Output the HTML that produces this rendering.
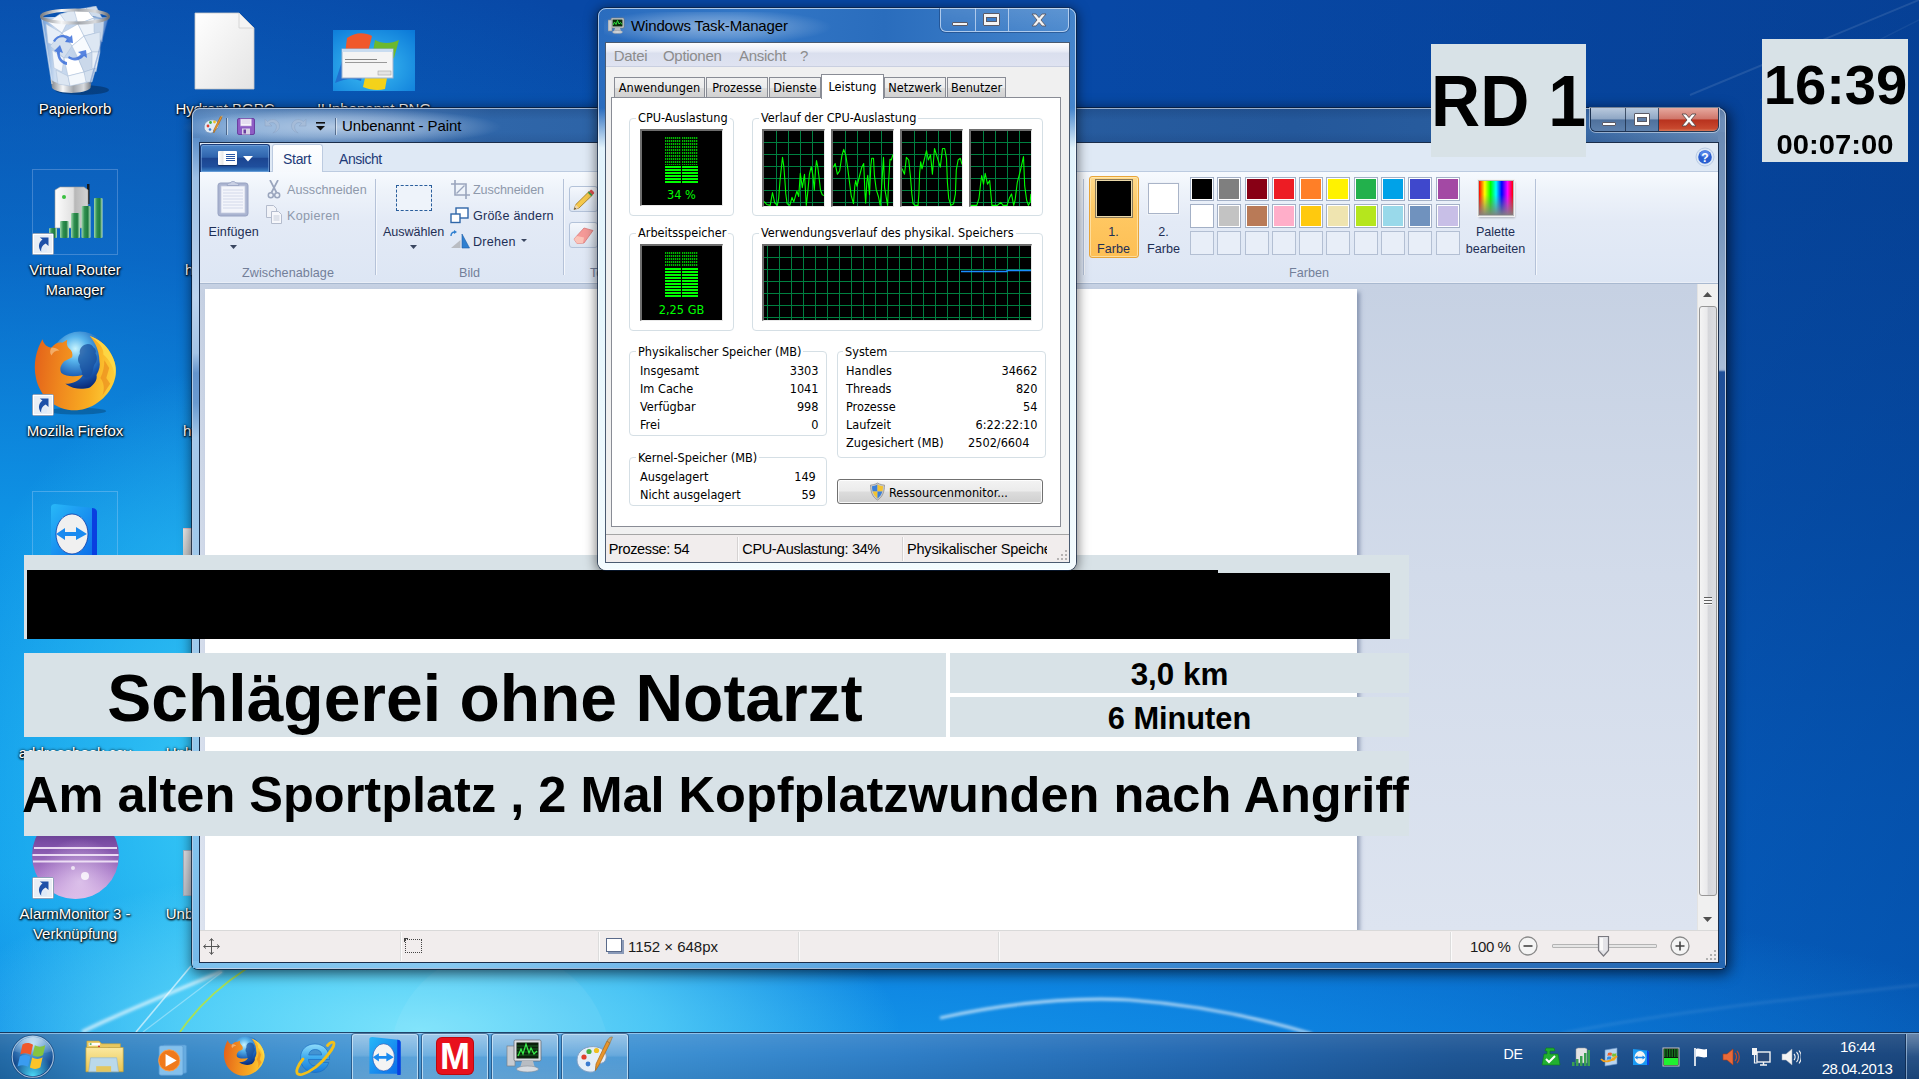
<!DOCTYPE html>
<html lang="de">
<head>
<meta charset="utf-8">
<title>Desktop</title>
<style>
html,body{margin:0;padding:0;}
body{width:1919px;height:1079px;overflow:hidden;position:relative;font-family:"Liberation Sans",sans-serif;font-size:15px;color:#000;
 background:
  radial-gradient(ellipse 480px 170px at 420px 1030px, rgba(128,230,252,.95), rgba(98,218,250,.7) 50%, rgba(60,195,246,0) 100%),
  radial-gradient(ellipse 330px 440px at 260px 800px, rgba(60,206,248,1), rgba(48,194,244,.7) 45%, rgba(30,160,235,0) 100%),
  radial-gradient(ellipse 1500px 230px at 600px 1079px, rgba(24,160,238,.95), rgba(16,140,230,.75) 50%, rgba(10,120,220,0) 100%),
  radial-gradient(ellipse 1250px 1000px at 0px 900px, rgba(16,158,236,1), rgba(15,152,233,.92) 38%, rgba(12,128,222,.55) 65%, rgba(8,100,205,0) 100%),
  linear-gradient(90deg, rgba(4,60,140,0) 1100px, rgba(3,50,120,.35) 1919px),
  linear-gradient(180deg,#0848a6 0px,#074aa6 200px,#0654b4 500px,#0662c8 800px,#066cd4 1079px);
}
.abs,.abs *{position:absolute;box-sizing:border-box;}
div,span,svg{position:absolute;box-sizing:border-box;}
.t{white-space:nowrap;line-height:1;}
.seg{font-family:"Liberation Sans",sans-serif;}
.tah{font-family:"DejaVu Sans Condensed","DejaVu Sans","Liberation Sans",sans-serif;font-size:12.6px;}
.ov{background:#d8e2e7;}
.ovt{font-family:"Liberation Sans",sans-serif;font-weight:bold;color:#000;white-space:nowrap;line-height:1;}
.dl{color:#fff;font-size:15px;white-space:nowrap;line-height:20px;text-align:center;text-shadow:0 1px 2px #000,0 0 3px rgba(0,0,0,.9),1px 1px 2px rgba(0,0,0,.8);}
</style>
</head>
<body>
<!-- wallpaper streaks -->
<svg style="left:0;top:940px" width="1919" height="100" viewBox="0 940 1919 100">
<defs><filter id="bl1" x="-5%" y="-50%" width="110%" height="200%"><feGaussianBlur stdDeviation="1.600"/></filter><filter id="bl2" x="-5%" y="-50%" width="110%" height="200%"><feGaussianBlur stdDeviation=".7"/></filter></defs>
<path d="M82 1032C130 1008 180 990 222 971" stroke="#fff" stroke-opacity=".7" stroke-width="3.500" fill="none" filter="url(#bl1)"/>
<path d="M136 1032L191 966" stroke="#fff" stroke-opacity=".6" stroke-width="1.600" fill="none" filter="url(#bl2)"/>
<path d="M143 1032L222 972" stroke="#fff" stroke-opacity=".35" stroke-width="1.200" fill="none" filter="url(#bl2)"/>
<path d="M180 1032C198 1006 220 986 246 969" stroke="#b8e43a" stroke-opacity=".85" stroke-width="1.800" fill="none" filter="url(#bl2)"/>
<path d="M940 1018C1010 1002 1080 997 1130 1000C1200 1005 1260 1018 1312 1034" stroke="#fff" stroke-opacity=".75" stroke-width="2.600" fill="none" filter="url(#bl1)"/>
<path d="M1560 1034C1650 1015 1780 1000 1919 985" stroke="#fff" stroke-opacity=".12" stroke-width="2" fill="none" filter="url(#bl1)"/>
<circle cx="500" cy="1060" r="110" fill="#fff" fill-opacity=".06"/>
</svg>
<svg style="left:1500px;top:0" width="419" height="110" viewBox="1500 0 419 110"><path d="M1919 0L1690 95" stroke="#fff" stroke-opacity=".10" stroke-width="2" fill="none"/><path d="M1919 20L1760 100" stroke="#fff" stroke-opacity=".06" stroke-width="1.500" fill="none"/></svg>
<!-- desktop icons -->
<div id="desktop" style="left:0;top:0;width:1919px;height:1079px;">
<svg style="left:38px;top:6px" width="74" height="90" viewBox="0 0 74 90">
<defs><linearGradient id="rbg" x1="0" y1="0" x2="1" y2="0"><stop offset="0" stop-color="#86aee0" stop-opacity=".8"/><stop offset=".2" stop-color="#dfe9f6" stop-opacity=".92"/><stop offset=".6" stop-color="#c9d8ec" stop-opacity=".92"/><stop offset="1" stop-color="#5f8ed0" stop-opacity=".85"/></linearGradient>
<linearGradient id="rbm" x1="0" y1="0" x2="1" y2="0"><stop offset="0" stop-color="#7c8086"/><stop offset=".3" stop-color="#f6f7f8"/><stop offset=".55" stop-color="#a2a6ac"/><stop offset=".8" stop-color="#d8dadd"/><stop offset="1" stop-color="#6d7177"/></linearGradient></defs>
<ellipse cx="44" cy="84" rx="27" ry="5" fill="#000" opacity=".28"/>
<path d="M3.500 11L14 78c8 5 30 5 38 0L70.500 11z" fill="url(#rbg)"/>
<path d="M12.500 72c2 9 39 9 41.500 0l-1.500 10c-6 6.500-32 6.500-38.500 0z" fill="url(#rbm)"/>
<g stroke="#a9bdd6" stroke-width=".5" stroke-linejoin="round">
<path d="M10 16l12-8 8 7-6 12z" fill="#f6f9fd"/><path d="M22 8l14-4 4 10-10 5z" fill="#dfe8f3"/><path d="M36 4l12-2 8 10-16 6z" fill="#ffffff"/><path d="M48 2l6 8 10 2-6-12z" fill="#cfdcec"/>
<path d="M8 18l16 9-4 14-10-4z" fill="#e6eef8"/><path d="M24 27l16-9 6 12-12 10z" fill="#ffffff"/><path d="M40 18l16-6 6 14-16 4z" fill="#edf3fa"/><path d="M56 12l10 2-2 22-8-10z" fill="#c4d4e8"/>
<path d="M12 40l12-13 10 13-8 12z" fill="#d3dfee"/><path d="M34 40l12-10 8 16-14 6z" fill="#f8fbfe"/><path d="M46 30l16-4 0 20-8 0z" fill="#dde7f3"/>
<path d="M14 44l12 8-2 14-8-4z" fill="#f2f6fb"/><path d="M26 52l14 0 6 14-16 4z" fill="#ffffff"/><path d="M40 52l14-6 4 16-12 4z" fill="#cad8ea"/><path d="M54 46l8 0-4 20-4-4z" fill="#e9f0f8"/>
<path d="M18 64l12 6 2 10-12-2z" fill="#dce6f2"/><path d="M30 70l16-4 4 10-18 4z" fill="#f4f8fc"/><path d="M46 66l12-4-4 14-6 0z" fill="#d4e0ee"/>
</g>
<path d="M17 36c2-5 8-6 12-3l-2 3 8 1-1-8-2 2c-6-4-14-2-17 4zM29 56c-5-1-8-5-7-10l3 1-3-8-6 6 3 1c0 7 4 12 10 13zM31 50c4 3 9 2 12-2l-3-2 8-2 1 8-3-2c-4 5-11 6-16 2z" fill="#2f66d8" opacity=".8"/>
<path d="M3.500 11L14 78" stroke="#fff" stroke-opacity=".5" stroke-width="1.500"/><path d="M70.500 11L52 78" stroke="#3a6ab8" stroke-opacity=".4" stroke-width="1.500"/>
<ellipse cx="37" cy="10.500" rx="33.500" ry="6.500" fill="none" stroke="url(#rbm)" stroke-width="3.200"/>
</svg>
<span class="t dl" style="top:100.60px;font-size:15px;left:0.0px;width:150px;text-align:center;line-height:1;">Papierkorb</span>
<svg style="left:193px;top:11px" width="64" height="82" viewBox="0 0 64 82"><defs><linearGradient id="pg" x1="0" y1="0" x2="1" y2="1"><stop offset="0" stop-color="#ffffff"/><stop offset="1" stop-color="#e4e4e4"/></linearGradient></defs>
<path d="M2 2h44l15 15v61H2z" fill="url(#pg)" stroke="#c8c8c8" stroke-width=".8"/><path d="M46 2v15h15z" fill="#f4f4f4" stroke="#cfcfcf" stroke-width=".8"/></svg>
<span class="t dl" style="top:100.60px;font-size:15px;left:150.0px;width:150px;text-align:center;line-height:1;">Hydrant BGPC</span>
<svg style="left:333px;top:30px" width="82" height="61" viewBox="0 0 82 61"><defs><radialGradient id="wp" cx=".45" cy=".6" r=".8"><stop offset="0" stop-color="#3fc0f4"/><stop offset="1" stop-color="#0a78d8"/></radialGradient></defs>
<rect width="82" height="61" fill="url(#wp)"/>
<path d="M14 8c8-6 18-6 25-2l-4 16c-8-3-16-2-23 2z" fill="#f0582a"/><path d="M42 10c7 4 16 4 24 0l-5 18c-7 3-15 2-22-1z" fill="#6cb82e"/><path d="M10 28c7-4 15-4 23-1l-5 24c-7-3-15-3-26 2z" fill="#1f6fd0"/><path d="M36 30c7 3 14 4 21 1l-5 28c-7 2-15 1-22-2z" fill="#f4d21a"/>
<rect x="9" y="19" width="51" height="29" fill="#f4f4f4" stroke="#9cb4d0" stroke-width="1"/><rect x="9" y="19" width="51" height="3" fill="#c9dcf0"/><rect x="12" y="29" width="32" height="1" fill="#888"/><rect x="12" y="32" width="42" height="1" fill="#999"/><rect x="45" y="41" width="13" height="4" fill="#e4e4e4" stroke="#999" stroke-width=".5"/></svg>
<span class="t dl" style="top:100.60px;font-size:15px;left:299.0px;width:150px;text-align:center;line-height:1;">!Unbenannt.PNG</span>
<div style="left:32px;top:169px;width:86px;height:86px;border:1px solid rgba(170,200,240,.32);background:rgba(120,170,235,.03);"></div>
<svg style="left:46px;top:182px" width="60" height="58" viewBox="0 0 60 58"><defs><linearGradient id="gb" x1="0" y1="0" x2="1" y2="0"><stop offset="0" stop-color="#9fd8ae"/><stop offset=".35" stop-color="#2f8f4f"/><stop offset=".7" stop-color="#1f7a3f"/><stop offset="1" stop-color="#bfe8c8"/></linearGradient><linearGradient id="dv" x1="0" y1="0" x2="1" y2="0"><stop offset="0" stop-color="#fdfdfd"/><stop offset=".55" stop-color="#e0e0e0"/><stop offset=".6" stop-color="#b8b8b8"/><stop offset="1" stop-color="#d4d4d4"/></linearGradient></defs>
<rect x="41" y="2" width="2.500" height="20" fill="#1a1a1a"/>
<path d="M9 8l5-3h24l4 3v38H9z" fill="url(#dv)" stroke="#9a9a9a" stroke-width=".6"/><circle cx="18" cy="15" r="2" fill="#3ac040"/>
<rect x="3" y="46" width="8" height="10" rx="1" fill="url(#gb)"/><rect x="14" y="39" width="9" height="17" rx="1" fill="url(#gb)"/><rect x="25" y="31" width="9" height="25" rx="1" fill="url(#gb)"/><rect x="35.500" y="24" width="9" height="32" rx="1" fill="url(#gb)"/><rect x="48" y="16" width="8.500" height="40" rx="1" fill="url(#gb)"/></svg>
<svg style="left:32px;top:233px" width="22" height="22" viewBox="0 0 22 22"><rect x=".5" y=".5" width="21" height="21" rx="1.500" fill="#e9eef5" stroke="#8ea0b8"/><rect x="1.500" y="1.500" width="19" height="19" fill="none" stroke="#fff"/><path d="M16.500 4.500v8.500l-2.800-2.600c-3.500 2-5 4.500-4.200 8.600-3.600-4-3.400-9.500 1-12.500L7.800 4.500z" fill="#1e50a8"/><path d="M9.500 19c-.5-3 1-5 3-6.500 2 1 3.500 3.500 2 6.500z" fill="#dfeaf8"/></svg>
<span class="t dl" style="top:261.50px;font-size:15px;left:0.0px;width:150px;text-align:center;line-height:1;">Virtual Router</span>
<span class="t dl" style="top:281.80px;font-size:15px;left:0.0px;width:150px;text-align:center;line-height:1;">Manager</span>
<svg style="left:33px;top:331px" width="86" height="84" viewBox="-1 0 88 86"><ellipse cx="44" cy="82" rx="30" ry="3.500" fill="#000" opacity=".22"/><defs><radialGradient id="fag" cx=".42" cy=".3" r=".7"><stop offset="0" stop-color="#c8f4fe"/><stop offset=".3" stop-color="#58b4ec"/><stop offset=".7" stop-color="#1a5cb4"/><stop offset="1" stop-color="#0a2a78"/></radialGradient><linearGradient id="faf" x1="0" y1=".4" x2="1" y2=".5"><stop offset="0" stop-color="#e4641a"/><stop offset=".35" stop-color="#f08a1e"/><stop offset=".7" stop-color="#f8ac22"/><stop offset="1" stop-color="#fdd03a"/></linearGradient></defs>
<circle cx="47" cy="30" r="29.500" fill="url(#fag)"/>
<path d="M52 14c4-2 8 0 9 3 2 1 3 4 2 6 2 3 2 8-1 11-2 4-1 8-4 12-3 3-8 2-9-2 1-4-3-6-2-10-3-3-2-8 0-11-1-4 2-8 5-9z" fill="#164a98" opacity=".7"/>
<path d="M8.700 8.500C10 14 14 17 18 17C21 13 25 11 29 12L34 9C33 13 34 16 36 18C39 20 40 24 39 27C36 29 33 30 31 31C27 35 26 39 28 43C33 47 42 47 50 45C47 51 40 54 32 54C40 60 50 60 57 58C62 54 65 50 64 45C67 40 68 35 67 31C67 24 65 18 63 14C61 10 59 7 57 5C66 8 74 14 78 22C83 30 85 38 83 48C80 62 66 78 46 81C24 83 6 68 2 48C-1 34 2 20 8.700 8.500Z" fill="url(#faf)"/>
<path d="M57 5c9 3 17 9 21 17 5 8 7 16 5 26-1-10-5-18-12-24 1-7-6-14-14-19z" fill="#fedc4a" opacity=".8"/>
<path d="M72 30l5 8-3 10 4 6-8 12c3-8 1-14-2-18 3-6 4-12 4-18z" fill="#e8801a" opacity=".55"/>
<path d="M18 17c3 0 6 1 8 3-4 0-7 2-8 5-2-2-2-5 0-8z" fill="#fbe0b0" opacity=".5"/></svg>
<svg style="left:32px;top:394px" width="22" height="22" viewBox="0 0 22 22"><rect x=".5" y=".5" width="21" height="21" rx="1.500" fill="#e9eef5" stroke="#8ea0b8"/><rect x="1.500" y="1.500" width="19" height="19" fill="none" stroke="#fff"/><path d="M16.500 4.500v8.500l-2.800-2.600c-3.500 2-5 4.500-4.200 8.600-3.600-4-3.400-9.500 1-12.500L7.800 4.500z" fill="#1e50a8"/><path d="M9.500 19c-.5-3 1-5 3-6.500 2 1 3.500 3.500 2 6.500z" fill="#dfeaf8"/></svg>
<span class="t dl" style="top:422.70px;font-size:15px;left:0.0px;width:150px;text-align:center;line-height:1;">Mozilla Firefox</span>
<div style="left:32px;top:491px;width:86px;height:86px;border:1px solid rgba(170,210,245,.35);background:rgba(140,200,245,.03);"></div>
<svg style="left:49px;top:503px" width="50" height="58" viewBox="0 0 50 58"><defs><linearGradient id="tvb" x1="0" y1="0" x2="1" y2="1"><stop offset="0" stop-color="#28b8f8"/><stop offset="1" stop-color="#0a6ae8"/></linearGradient></defs>
<path d="M2 4c0-2 2-3 4-3l38 4c3 0 4 2 4 4v46H2z" fill="url(#tvb)"/><path d="M43 5c3 0 5 2 5 4v48h-5z" fill="#0a3fe0"/>
<ellipse cx="23" cy="31" rx="16" ry="20" fill="#f0f0f0" stroke="#0a3aa8" stroke-width=".8"/>
<path d="M7 31l9-6v4h11v-5l11 7-11 6v-4H16v4z" fill="#1a8af0"/></svg>
<span class="t dl" style="top:744.80px;font-size:15px;left:0.0px;width:150px;text-align:center;line-height:1;">addressbook.csv</span>
<span class="t dl" style="top:744.80px;font-size:15px;left:150.0px;width:150px;text-align:center;line-height:1;">Unbenannt2.PNG</span>
<span class="t dl" style="top:261.50px;font-size:15px;left:185px;line-height:1;">hydrant.png</span>
<span class="t dl" style="top:422.70px;font-size:15px;left:183px;line-height:1;">hydrant2.png</span>
<div style="left:183px;top:528px;width:40px;height:30px;background:linear-gradient(180deg,#e8e8e8,#c8c8c8);border-top:1px solid #f0c0c0;"></div>
<div style="left:183px;top:850px;width:40px;height:46px;background:linear-gradient(180deg,#e0e0e4,#c0c4cc);border:1px solid #a8b0c0;"></div>
<svg style="left:30px;top:810px" width="92" height="92" viewBox="0 0 92 92"><defs><linearGradient id="am" x1="0" y1="0" x2="0" y2="1"><stop offset="0" stop-color="#3f2468"/><stop offset=".35" stop-color="#7a4ca4"/><stop offset=".7" stop-color="#a878c8"/><stop offset="1" stop-color="#d0a8e0"/></linearGradient><radialGradient id="am2" cx=".55" cy=".8" r=".5"><stop offset="0" stop-color="#f4e4fa" stop-opacity=".6"/><stop offset="1" stop-color="#f4e4fa" stop-opacity="0"/></radialGradient></defs>
<circle cx="45.500" cy="45.500" r="43.500" fill="url(#am)"/><circle cx="45.500" cy="45.500" r="43.500" fill="url(#am2)"/>
<path d="M4 38h83" stroke="#f4e8fa" stroke-width="2.200" opacity=".9"/><path d="M2.500 45h86" stroke="#f4e8fa" stroke-width="2.200" opacity=".9"/><path d="M3 51.500h85" stroke="#f4e8fa" stroke-width="2.200" opacity=".9"/>
<circle cx="55" cy="66" r="4" fill="#fff" opacity=".8"/><circle cx="43" cy="58" r="2" fill="#fff" opacity=".7"/></svg>
<svg style="left:32px;top:877px" width="22" height="22" viewBox="0 0 22 22"><rect x=".5" y=".5" width="21" height="21" rx="1.500" fill="#e9eef5" stroke="#8ea0b8"/><rect x="1.500" y="1.500" width="19" height="19" fill="none" stroke="#fff"/><path d="M16.500 4.500v8.500l-2.800-2.600c-3.500 2-5 4.500-4.200 8.600-3.600-4-3.400-9.500 1-12.500L7.800 4.500z" fill="#1e50a8"/><path d="M9.500 19c-.5-3 1-5 3-6.500 2 1 3.500 3.500 2 6.500z" fill="#dfeaf8"/></svg>
<span class="t dl" style="top:906.00px;font-size:15px;left:0.0px;width:150px;text-align:center;line-height:1;">AlarmMonitor 3 -</span>
<span class="t dl" style="top:925.70px;font-size:15px;left:0.0px;width:150px;text-align:center;line-height:1;">Verknüpfung</span>
<span class="t dl" style="top:906.00px;font-size:15px;left:150.0px;width:150px;text-align:center;line-height:1;">Unbenannt3.PNG</span>
</div>
<!-- Paint window -->
<div id="paint" style="left:192px;top:108px;width:1534px;height:861px;border-radius:8px 8px 6px 6px;box-shadow:0 0 0 1px rgba(10,25,50,.75),2px 3px 13px 2px rgba(0,0,10,.62);background:linear-gradient(180deg,rgba(10,30,70,.18) 0,rgba(10,30,70,0) 12px,rgba(10,30,70,0) 24px,rgba(10,30,70,.12) 35px,rgba(0,0,0,0) 36px),linear-gradient(90deg,#5c8cc4 0px,#6f9ccf 40px,#4a7dbb 200px,#2f66a9 300px,#2b61a4 520px,#24589b 1100px,#2a5e9f 1350px,#5d84b4 1500px,#6f8fb8 1534px);">
<div style="left:0px;top:0px;width:1534px;height:861px;border:1px solid rgba(255,255,255,.55);border-radius:8px 8px 6px 6px;"></div>
<div style="left:1px;top:30px;width:7px;height:830px;background:linear-gradient(180deg,#5b8ec8 0,#9cbfe4 40px,#bcd4ee 160px,#a4c4e6 215px,#6494cc 235px,#6a9ad0 265px,#a4c8ea 300px,#9ccaec 560px,#84c4ee 700px,#74b8e8 830px);"></div>
<div style="left:1526px;top:24px;width:7px;height:836px;background:linear-gradient(180deg,#6a8ab4 0,#7a98be 100px,#a9bdd8 236px,#9db4d4 238px,#1f4f98 240px,#2458a6 400px,#2662b0 650px,#2668b4 836px);"></div>
<div style="left:1px;top:853px;width:1532px;height:7px;background:linear-gradient(90deg,#7cc0ec 0,#86c8f0 250px,#62aae2 600px,#3c8ad2 950px,#2c72be 1250px,#2466b0 1532px);border-radius:0 0 5px 5px;"></div>
<div style="left:-10px;top:2px;width:320px;height:34px;background:radial-gradient(ellipse 50% 55% at 50% 50%,rgba(255,255,255,.55),rgba(255,255,255,.3) 55%,rgba(255,255,255,0) 100%);"></div>
<svg style="left:10px;top:7px" width="22" height="22" viewBox="0 0 22 22"><path d="M2 12c0-5 5-8 10-7 5 1 6 5 4 8-1 2-3 1-4 2s0 3-2 3c-4 1-8-2-8-6z" fill="#dfeaf6" stroke="#6f93bd" stroke-width="1"/><circle cx="6" cy="11" r="1.4" fill="#e04030"/><circle cx="8.5" cy="7.5" r="1.4" fill="#40b040"/><circle cx="12.5" cy="7" r="1.4" fill="#f0c020"/><circle cx="8" cy="14.5" r="1.3" fill="#3a7bd0"/><path d="M18.5 1.5l1.5 1-6.5 12.5-1.8 3 .3-3.6z" fill="#e8952c" stroke="#a86414" stroke-width=".6"/><path d="M18.5 1.5l1.5 1 .8-2.2z" fill="#c9a36a"/></svg>
<div style="left:34px;top:10px;width:1px;height:17px;background:rgba(30,50,80,.55);box-shadow:1px 0 0 rgba(255,255,255,.5);"></div>
<svg style="left:45px;top:10px" width="18" height="17" viewBox="0 0 18 17"><rect x=".5" y=".5" width="17" height="16" rx="1.5" fill="#8e5cc4" stroke="#6a3fa0"/><rect x="3.5" y="1" width="11" height="7" fill="#f7f4fb" stroke="#b9a2d8" stroke-width=".6"/><path d="M4.5 3h9M4.5 5h9" stroke="#c9bddf" stroke-width=".8"/><rect x="5" y="10.5" width="8" height="6" fill="#d9d3e6"/><rect x="6.5" y="11.5" width="2.5" height="4" fill="#6a3fa0"/></svg>
<svg style="left:71px;top:9px" width="19" height="19" viewBox="0 0 19 19"><path d="M2 2v7h7l-2.6-2.6c3-2 7-.3 7 3.600 0 2.500-1.500 4.500-3.500 6 5-1.500 7-4.500 6.500-8-.6-5-7-7.500-12-3.500z" fill="#a7bcd8" stroke="#8aa2c4" stroke-width=".6" opacity=".85"/></svg>
<svg style="left:97px;top:9px" width="19" height="19" viewBox="0 0 19 19"><path d="M17 2v7h-7l2.600-2.600c-3-2-7-.3-7 3.600 0 2.500 1.500 4.500 3.500 6-5-1.500-7-4.500-6.500-8 .6-5 7-7.500 12-3.500z" fill="#a7bcd8" stroke="#8aa2c4" stroke-width=".6" opacity=".85"/></svg>
<svg style="left:124px;top:14px" width="9" height="9" viewBox="0 0 9 9"><rect x="0" y="0" width="9" height="1.600" fill="#111"/><path d="M0 4h9l-4.500 4.500z" fill="#111"/></svg>
<div style="left:143px;top:10px;width:1px;height:17px;background:rgba(30,50,80,.55);box-shadow:1px 0 0 rgba(255,255,255,.5);"></div>
<span class="t " style="top:10.30px;font-size:15px;left:150px;color:#000;letter-spacing:-.1px;">Unbenannt - Paint</span>
<div style="left:1398px;top:0px;width:129px;height:24px;border:1px solid rgba(20,35,60,.8);border-top:none;border-radius:0 0 6px 6px;box-shadow:0 0 0 1px rgba(255,255,255,.45);overflow:hidden;"><div style="left:0px;top:0px;width:35px;height:24px;background:linear-gradient(180deg,#b9c9dd 0,#8fa7c5 45%,#4f719d 50%,#5f82ae 100%);border-right:1px solid rgba(20,35,60,.7);"><div style="left:11px;top:14px;width:14px;height:4px;background:#fff;border:1px solid #5a5a66;border-radius:1px"></div></div><div style="left:35px;top:0px;width:33px;height:24px;background:linear-gradient(180deg,#b9c9dd 0,#8fa7c5 45%,#4f719d 50%,#5f82ae 100%);border-right:1px solid rgba(20,35,60,.7);"><div style="left:8px;top:5px;width:16px;height:13px;background:#fff;border:1px solid #5a5a66;border-radius:1px"></div><div style="left:11px;top:9px;width:10px;height:5px;background:#5f7fa8;border:1px solid #5a5a66"></div></div><div style="left:68px;top:0px;width:60px;height:24px;background:linear-gradient(180deg,#e6a99f 0,#d0766a 45%,#b8321e 50%,#c8482e 85%,#d98a6a 100%);"><svg style="left:22px;top:5px" width="16" height="14" viewBox="0 0 16 14"><path d="M1 1h4l3 3.600L11 1h4l-5 6 5 6h-4L8 9.400 5 13H1l5-6z" fill="#fff" stroke="#5a4a4a" stroke-width=".9"/></svg></div></div>
<div style="left:7px;top:34px;width:1520px;height:821px;background:#1a2d4a;"></div>
<div style="left:8px;top:35px;width:1518px;height:819px;background:#c9d3e3;overflow:hidden;"><div style="left:0px;top:0px;width:1518px;height:29px;background:#dfe9f5;"></div>
<div style="left:0px;top:28px;width:1518px;height:1px;background:#bccbe0;"></div>
<div style="left:0px;top:1px;width:70px;height:28px;background:linear-gradient(180deg,#4d86c8 0,#2f64ad 45%,#1c4591 50%,#1f4f9d 80%,#3f86c8 100%);border:1px solid #1a3d7c;border-bottom:none;border-radius:3px 3px 0 0;box-shadow:inset 0 0 0 1px rgba(140,180,230,.5);"><div style="left:17px;top:6px;width:19px;height:14px;background:linear-gradient(90deg,#fff 0,#e8e8e8 5px,#fff 6px);border-radius:1px;box-shadow:0 1px 1px rgba(0,0,0,.4)"></div><div style="left:25px;top:9px;width:9px;height:8px;background:repeating-linear-gradient(180deg,#2a57a5 0,#2a57a5 1px,#fff 1px,#fff 2px)"></div><svg style="left:42px;top:11px" width="10" height="5.500" viewBox="0 0 9 5"><path d="M0 0h9L4.500 5z" fill="#fff"/></svg></div>
<div style="left:72px;top:1px;width:51px;height:29px;background:linear-gradient(180deg,#fdfeff,#f6f9fd);border:1px solid #bccbe0;border-bottom:none;border-radius:3px 3px 0 0;"></div>
<span class="t " style="top:8.75px;font-size:14px;left:83px;color:#1e3a78;letter-spacing:-.3px;">Start</span>
<span class="t " style="top:8.75px;font-size:14px;left:139px;color:#1e3a78;letter-spacing:-.45px;">Ansicht</span>
<svg style="left:1495px;top:4px" width="20" height="20" viewBox="0 0 20 20"><circle cx="10" cy="10" r="9" fill="#dce8f6" stroke="#b9cbe4"/><circle cx="10" cy="10" r="6.800" fill="#2a5fd0"/><ellipse cx="10" cy="7" rx="5" ry="3.500" fill="#5c8cec" opacity=".8"/></svg>
<span class="t " style="top:8.84px;font-size:12px;left:1495.0px;width:20px;text-align:center;color:#fff;font-weight:bold;">?</span>
<div style="left:0px;top:29px;width:1518px;height:110px;background:linear-gradient(180deg,#f7fafe 0,#eef3fa 18px,#e3eaf6 50px,#dde6f4 100%);"></div>
<div style="left:0px;top:139px;width:1518px;height:1px;background:#e9eef7;"></div>
<div style="left:0px;top:140px;width:1518px;height:1px;background:#a9b9d0;"></div>
<svg style="left:17px;top:37px" width="32" height="37" viewBox="0 0 32 37"><rect x="1" y="3" width="30" height="33" rx="2.500" fill="#aab4d0" stroke="#97a2c2"/><rect x="4" y="6" width="24" height="27" fill="#f3f5fb" stroke="#c5cce0" stroke-width=".8"/><path d="M6 10h20M6 13h20M6 16h20M6 19h20M6 22h20M6 25h20M6 28h20" stroke="#d3d9ea" stroke-width="1"/><path d="M10 5.500c0-2 2-2.500 3.500-2.500 0-2 5-2 5 0 1.500 0 3.500.5 3.500 2.500z" fill="#c9d0e4" stroke="#97a2c2" stroke-width=".8"/></svg>
<span class="t " style="top:82.83px;font-size:12.6px;left:8.400000000000006px;color:#1e2f55;letter-spacing:.1px;">Einfügen</span>
<svg style="left:30px;top:102px" width="7" height="4" viewBox="0 0 7 4"><path d="M0 0h7L3.500 4z" fill="#3a4660"/></svg>
<svg style="left:67px;top:37px" width="14" height="19" viewBox="0 0 14 19"><path d="M3 0L9.500 12.500M11 0L4.500 12.500" stroke="#9aa5bd" stroke-width="1.700" fill="none"/><circle cx="3.800" cy="15.200" r="2.500" fill="none" stroke="#9aa5bd" stroke-width="1.500"/><circle cx="10.200" cy="15.200" r="2.500" fill="none" stroke="#9aa5bd" stroke-width="1.500"/></svg>
<span class="t " style="top:40.83px;font-size:12.6px;left:87px;color:#8e99ab;letter-spacing:.05px;">Ausschneiden</span>
<svg style="left:66px;top:62px" width="16" height="19" viewBox="0 0 16 19"><path d="M.5.500h7l3 3v9h-10z" fill="#f1f3f8" stroke="#b4bccd"/><path d="M5.500 6.500h7l3 3v9h-10z" fill="#f6f7fb" stroke="#b4bccd"/><path d="M7.500 11h6M7.500 13h6M7.500 15h6" stroke="#c5ccd9"/></svg>
<span class="t " style="top:67.23px;font-size:12.6px;left:87px;color:#8e99ab;letter-spacing:.3px;">Kopieren</span>
<span class="t " style="top:124.03px;font-size:12.6px;left:18.0px;width:140px;text-align:center;color:#737f99;letter-spacing:.07px;">Zwischenablage</span>
<div style="left:175px;top:36px;width:1px;height:96px;background:#b5c2d8;box-shadow:1px 0 0 #f4f7fc;"></div>
<div style="left:196px;top:42px;width:36px;height:26px;border:1px dashed #2a5e9c;background:#eef3fa;"></div>
<span class="t " style="top:82.83px;font-size:12.6px;left:183px;color:#1e2f55;letter-spacing:-.05px;">Auswählen</span>
<svg style="left:210px;top:102px" width="7" height="4" viewBox="0 0 7 4"><path d="M0 0h7L3.500 4z" fill="#3a4660"/></svg>
<svg style="left:251px;top:37px" width="19" height="19" viewBox="0 0 19 19"><path d="M4 0v15h15M0 4h15v15" stroke="#9aa5bd" stroke-width="1.600" fill="none"/><path d="M5.500 13.500l8-8" stroke="#9aa5bd" stroke-width="1.200"/></svg>
<span class="t " style="top:40.83px;font-size:12.6px;left:273px;color:#8e99ab;letter-spacing:-.1px;">Zuschneiden</span>
<svg style="left:250px;top:64px" width="19" height="17" viewBox="0 0 19 17"><rect x="6" y="1" width="12" height="10" fill="#fff" stroke="#2f66a8" stroke-width="1.400"/><rect x="1" y="7" width="9" height="8.500" fill="#fff" stroke="#2f66a8" stroke-width="1.400"/></svg>
<span class="t " style="top:67.23px;font-size:12.6px;left:273px;color:#1e2f55;letter-spacing:.2px;">Größe ändern</span>
<svg style="left:250px;top:87px" width="20" height="19" viewBox="0 0 20 19"><path d="M12 4v14h7.500z" fill="#2f7fd0" stroke="#1f5fa8" stroke-width=".6"/><path d="M10.500 10v8H1z" fill="#b9bcc2"/><path d="M1 6c0-3 2-4 4-4" stroke="#2f7fd0" stroke-width="1.400" fill="none"/><path d="M4 0l3 2-3 2z" fill="#2f7fd0"/></svg>
<span class="t " style="top:92.93px;font-size:12.6px;left:273px;color:#1e2f55;letter-spacing:.25px;">Drehen</span>
<svg style="left:321px;top:96px" width="6" height="3" viewBox="0 0 6 3"><path d="M0 0h6L3 3z" fill="#3a4660"/></svg>
<span class="t " style="top:124.03px;font-size:12.6px;left:239.5px;width:60px;text-align:center;color:#737f99;">Bild</span>
<div style="left:363px;top:36px;width:1px;height:96px;background:#b5c2d8;box-shadow:1px 0 0 #f4f7fc;"></div>
<div style="left:369px;top:43px;width:29px;height:26px;border:1px solid #b3c2d9;border-radius:3px;background:linear-gradient(180deg,#f4f7fc,#dbe4f1);"><svg style="left:3px;top:2px" width="22" height="22" viewBox="0 0 22 22"><path d="M1 20.500l1.800-5L16 2.500l3.500 3.500L6 19z" fill="#f5c84a" stroke="#9a7420" stroke-width=".8"/><path d="M1 20.500l1.800-5L6 19z" fill="#f0d5a8"/><path d="M1 20.500l.8-2 1.300 1.300z" fill="#333"/><path d="M16 2.500l1.500-1.500c1-1 4.500 2.500 3.500 3.500l-1.500 1.500z" fill="#e05050"/><path d="M14.800 3.700l1.200-1.200 3.500 3.500-1.200 1.200z" fill="#3a9a4a"/></svg></div>
<div style="left:369px;top:79px;width:29px;height:26px;border:1px solid #b3c2d9;border-radius:3px;background:linear-gradient(180deg,#f4f7fc,#dbe4f1);"><svg style="left:3px;top:3px" width="22" height="20" viewBox="0 0 22 20"><path d="M1 13l10-11 9 2.500-9 12.500-7 .5z" fill="#f59a98" stroke="#d97a78" stroke-width=".8"/><path d="M1 13l3-3 7 1.500-1 5.500-6 .5z" fill="#fbc3b8"/></svg></div>
<span class="t " style="top:124.03px;font-size:12.6px;left:390px;color:#737f99;">Tools</span>
<div style="left:883px;top:36px;width:1px;height:96px;background:#b5c2d8;box-shadow:1px 0 0 #f4f7fc;"></div>
<div style="left:889px;top:33px;width:50px;height:82px;border:1px solid #e8a53a;border-radius:3px;background:linear-gradient(180deg,#ffd98a 0,#ffc964 40%,#fdbf55 100%);box-shadow:inset 0 0 0 1px rgba(255,240,200,.6);"></div>
<div style="left:895px;top:36px;width:38px;height:39px;background:#000;border:1px solid #8a7a5a;box-shadow:inset 0 0 0 1px #d8c8a0;"></div>
<div style="left:896px;top:37px;width:36px;height:37px;border:1px solid #e9d7a8;background:#000;"></div>
<span class="t " style="top:82.73px;font-size:12.6px;left:888.5px;width:50px;text-align:center;color:#1e2f55;">1.</span>
<span class="t " style="top:99.73px;font-size:12.6px;left:888.5px;width:50px;text-align:center;color:#1e2f55;">Farbe</span>
<div style="left:948px;top:40px;width:31px;height:31px;background:#fff;border:1px solid #a9b4c8;box-shadow:inset 0 0 0 1px #fff,0 0 0 1px #eef2f8;"></div>
<span class="t " style="top:82.73px;font-size:12.6px;left:938.5px;width:50px;text-align:center;color:#1e2f55;">2.</span>
<span class="t " style="top:99.73px;font-size:12.6px;left:938.5px;width:50px;text-align:center;color:#1e2f55;">Farbe</span>
<div style="left:990px;top:34px;width:24px;height:24px;background:#000000;border:1px solid #a3b0c6;box-shadow:inset 0 0 0 1px #fff;"></div>
<div style="left:990px;top:61px;width:24px;height:24px;background:#ffffff;border:1px solid #a3b0c6;box-shadow:inset 0 0 0 1px #fff;"></div>
<div style="left:990px;top:88px;width:24px;height:24px;background:#e8eef8;border:1px solid #b3bfd3;"></div>
<div style="left:1017px;top:34px;width:24px;height:24px;background:#7f7f7f;border:1px solid #a3b0c6;box-shadow:inset 0 0 0 1px #fff;"></div>
<div style="left:1017px;top:61px;width:24px;height:24px;background:#c3c3c3;border:1px solid #a3b0c6;box-shadow:inset 0 0 0 1px #fff;"></div>
<div style="left:1017px;top:88px;width:24px;height:24px;background:#e8eef8;border:1px solid #b3bfd3;"></div>
<div style="left:1045px;top:34px;width:24px;height:24px;background:#880015;border:1px solid #a3b0c6;box-shadow:inset 0 0 0 1px #fff;"></div>
<div style="left:1045px;top:61px;width:24px;height:24px;background:#b97a57;border:1px solid #a3b0c6;box-shadow:inset 0 0 0 1px #fff;"></div>
<div style="left:1045px;top:88px;width:24px;height:24px;background:#e8eef8;border:1px solid #b3bfd3;"></div>
<div style="left:1072px;top:34px;width:24px;height:24px;background:#ed1c24;border:1px solid #a3b0c6;box-shadow:inset 0 0 0 1px #fff;"></div>
<div style="left:1072px;top:61px;width:24px;height:24px;background:#ffaec9;border:1px solid #a3b0c6;box-shadow:inset 0 0 0 1px #fff;"></div>
<div style="left:1072px;top:88px;width:24px;height:24px;background:#e8eef8;border:1px solid #b3bfd3;"></div>
<div style="left:1099px;top:34px;width:24px;height:24px;background:#ff7f27;border:1px solid #a3b0c6;box-shadow:inset 0 0 0 1px #fff;"></div>
<div style="left:1099px;top:61px;width:24px;height:24px;background:#ffc90e;border:1px solid #a3b0c6;box-shadow:inset 0 0 0 1px #fff;"></div>
<div style="left:1099px;top:88px;width:24px;height:24px;background:#e8eef8;border:1px solid #b3bfd3;"></div>
<div style="left:1126px;top:34px;width:24px;height:24px;background:#fff200;border:1px solid #a3b0c6;box-shadow:inset 0 0 0 1px #fff;"></div>
<div style="left:1126px;top:61px;width:24px;height:24px;background:#efe4b0;border:1px solid #a3b0c6;box-shadow:inset 0 0 0 1px #fff;"></div>
<div style="left:1126px;top:88px;width:24px;height:24px;background:#e8eef8;border:1px solid #b3bfd3;"></div>
<div style="left:1154px;top:34px;width:24px;height:24px;background:#22b14c;border:1px solid #a3b0c6;box-shadow:inset 0 0 0 1px #fff;"></div>
<div style="left:1154px;top:61px;width:24px;height:24px;background:#b5e61d;border:1px solid #a3b0c6;box-shadow:inset 0 0 0 1px #fff;"></div>
<div style="left:1154px;top:88px;width:24px;height:24px;background:#e8eef8;border:1px solid #b3bfd3;"></div>
<div style="left:1181px;top:34px;width:24px;height:24px;background:#00a2e8;border:1px solid #a3b0c6;box-shadow:inset 0 0 0 1px #fff;"></div>
<div style="left:1181px;top:61px;width:24px;height:24px;background:#99d9ea;border:1px solid #a3b0c6;box-shadow:inset 0 0 0 1px #fff;"></div>
<div style="left:1181px;top:88px;width:24px;height:24px;background:#e8eef8;border:1px solid #b3bfd3;"></div>
<div style="left:1208px;top:34px;width:24px;height:24px;background:#3f48cc;border:1px solid #a3b0c6;box-shadow:inset 0 0 0 1px #fff;"></div>
<div style="left:1208px;top:61px;width:24px;height:24px;background:#7092be;border:1px solid #a3b0c6;box-shadow:inset 0 0 0 1px #fff;"></div>
<div style="left:1208px;top:88px;width:24px;height:24px;background:#e8eef8;border:1px solid #b3bfd3;"></div>
<div style="left:1236px;top:34px;width:24px;height:24px;background:#a349a4;border:1px solid #a3b0c6;box-shadow:inset 0 0 0 1px #fff;"></div>
<div style="left:1236px;top:61px;width:24px;height:24px;background:#c8bfe7;border:1px solid #a3b0c6;box-shadow:inset 0 0 0 1px #fff;"></div>
<div style="left:1236px;top:88px;width:24px;height:24px;background:#e8eef8;border:1px solid #b3bfd3;"></div>
<div style="left:1278px;top:37px;width:36px;height:36px;border:1px solid #b9b9b9;background:linear-gradient(180deg,rgba(128,128,128,0) 0,rgba(128,128,128,0) 40%,rgba(128,128,128,.95) 100%),linear-gradient(90deg,#ff0000 0,#ffff00 17%,#00ff00 34%,#00ffff 50%,#0000ff 67%,#ff00ff 84%,#ff0000 100%);box-shadow:0 0 0 1px #f2f2f2,1px 2px 2px rgba(0,0,0,.25);"></div>
<span class="t " style="top:82.73px;font-size:12.6px;left:1250.5px;width:90px;text-align:center;color:#1e2f55;">Palette</span>
<span class="t " style="top:99.73px;font-size:12.6px;left:1250.5px;width:90px;text-align:center;color:#1e2f55;">bearbeiten</span>
<span class="t " style="top:124.03px;font-size:12.6px;left:1064.0px;width:90px;text-align:center;color:#737f99;">Farben</span>
<div style="left:1335px;top:36px;width:1px;height:96px;background:#b5c2d8;box-shadow:1px 0 0 #f4f7fc;"></div>
<div style="left:0px;top:141px;width:1498px;height:646px;background:linear-gradient(180deg,#c6d1e3 0,#d2dbea 45%,#dde4f0 100%);"></div>
<div style="left:5px;top:146px;width:1152px;height:641px;background:#fff;box-shadow:3px 3px 4px rgba(90,105,140,.55);"></div>
<div style="left:1497px;top:141px;width:21px;height:646px;background:#f0f0f0;border-left:1px solid #e3e3e3;"></div>
<svg style="left:1503px;top:149px" width="9" height="5" viewBox="0 0 9 5"><path d="M0 5h9L4.500 0z" fill="#505050"/></svg>
<svg style="left:1503px;top:774px" width="9" height="5" viewBox="0 0 9 5"><path d="M0 0h9L4.500 5z" fill="#505050"/></svg>
<div style="left:1499px;top:163px;width:18px;height:590px;border:1px solid #979797;border-radius:3px;background:linear-gradient(90deg,#f4f4f4 0,#e9e9eb 45%,#d5d6da 50%,#dcdde1 100%);"><div style="left:4px;top:290px;width:8px;height:8px;background:repeating-linear-gradient(180deg,#606060 0,#606060 1px,rgba(255,255,255,.7) 1px,rgba(255,255,255,.7) 3px)"></div></div>
<div style="left:0px;top:787px;width:1518px;height:32px;background:#f1eded;border-top:1px solid #d9d9d9;"></div>
<div style="left:200px;top:789px;width:1px;height:29px;background:#dcdcdc;box-shadow:1px 0 0 #fbfbfb;"></div>
<div style="left:398px;top:789px;width:1px;height:29px;background:#dcdcdc;box-shadow:1px 0 0 #fbfbfb;"></div>
<div style="left:598px;top:789px;width:1px;height:29px;background:#dcdcdc;box-shadow:1px 0 0 #fbfbfb;"></div>
<div style="left:798px;top:789px;width:1px;height:29px;background:#dcdcdc;box-shadow:1px 0 0 #fbfbfb;"></div>
<div style="left:1250px;top:789px;width:1px;height:29px;background:#dcdcdc;box-shadow:1px 0 0 #fbfbfb;"></div>
<svg style="left:3px;top:795px" width="17" height="17" viewBox="0 0 17 17"><path d="M8.500 1v15M1 8.500h15" stroke="#555" stroke-width="1"/><path d="M6.500 3l2-2.500 2 2.500M6.500 14l2 2.500 2-2.500M3 6.500L.500 8.500 3 10.500M14 6.500l2.500 2-2.500 2" fill="none" stroke="#555"/></svg>
<div style="left:205px;top:796px;width:17px;height:14px;border:1px dotted #444;"></div>
<div style="left:204px;top:795px;width:4px;height:4px;border-left:1px solid #444;border-top:1px solid #444;"></div>
<div style="left:406px;top:795px;width:16px;height:14px;border:1px solid #5a6a8a;background:#fff;box-shadow:2px 2px 0 #8a9ab8;"></div>
<span class="t " style="top:796.30px;font-size:15px;left:428px;color:#1a1a1a;letter-spacing:-.02px;">1152 × 648px</span>
<span class="t " style="top:796.30px;font-size:15px;left:1270px;color:#1a1a1a;letter-spacing:-.4px;">100 %</span>
<svg style="left:1317px;top:792px" width="22" height="22" viewBox="0 0 22 22"><circle cx="11" cy="11" r="9" fill="#f4f4f4" stroke="#8a8a8a" stroke-width="1.300"/><path d="M6.500 11h9" stroke="#444" stroke-width="1.600"/></svg>
<div style="left:1352px;top:801px;width:105px;height:4px;background:#e6e6e6;border:1px solid #b4b4b4;border-radius:1px;"></div>
<div style="left:1403px;top:797px;width:1px;height:3px;background:#888;"></div>
<svg style="left:1397px;top:792px" width="13" height="22" viewBox="0 0 13 22"><path d="M1.500 1.500h10v14L6.500 21l-5-5.500z" fill="#e4e4e8" stroke="#7a7a80" stroke-width="1.200"/><path d="M3 3h3v12.500L3 15z" fill="#fafafa"/></svg>
<svg style="left:1469px;top:792px" width="22" height="22" viewBox="0 0 22 22"><circle cx="11" cy="11" r="9" fill="#f4f4f4" stroke="#8a8a8a" stroke-width="1.300"/><path d="M6.500 11h9M11 6.500v9" stroke="#444" stroke-width="1.600"/></svg>
<svg style="left:1505px;top:806px" width="12" height="12" viewBox="0 0 12 12"><g fill="#b0b0b0"><rect x="9" y="1" width="2" height="2"/><rect x="9" y="5" width="2" height="2"/><rect x="5" y="5" width="2" height="2"/><rect x="9" y="9" width="2" height="2"/><rect x="5" y="9" width="2" height="2"/><rect x="1" y="9" width="2" height="2"/></g></svg></div>
</div>
<!-- overlay panels -->
<div id="overlay" style="left:0;top:0;width:1919px;height:1079px;">
<div class="ov" style="left:24px;top:555px;width:1385px;height:84px;"></div>
<div style="left:27px;top:570px;width:1191px;height:69px;background:#000;"></div>
<div style="left:1218px;top:573px;width:172px;height:66px;background:#000;"></div>
<div class="ov" style="left:24px;top:653px;width:922px;height:84px;"></div>
<div class="ov" style="left:950px;top:653px;width:459px;height:40px;"></div>
<div class="ov" style="left:950px;top:697px;width:459px;height:40px;"></div>
<span class="t ovt" style="top:664.63px;font-size:66px;left:24.0px;width:922px;text-align:center;">Schlägerei ohne Notarzt</span>
<span class="t ovt" style="top:659.42px;font-size:31.4px;left:950.0px;width:459px;text-align:center;">3,0 km</span>
<span class="t ovt" style="top:703.97px;font-size:30.75px;left:950.0px;width:459px;text-align:center;">6 Minuten</span>
<div class="ov" style="left:24px;top:751px;width:1385px;height:85px;"></div>
<span class="t ovt" style="top:770.25px;font-size:50.5px;left:22px;">Am alten Sportplatz , 2 Mal Kopfplatzwunden nach Angriff</span>
<div class="ov" style="left:1431px;top:44px;width:155px;height:113px;"></div>
<span class="t ovt" style="top:68.44px;font-size:68px;left:1431.0px;width:155px;text-align:center;transform:scaleY(1.05);transform-origin:50% 84.65%;">RD 1</span>
<div class="ov" style="left:1762px;top:39px;width:146px;height:123px;"></div>
<span class="t ovt" style="top:56.93px;font-size:56.2px;left:1762.5px;width:146px;text-align:center;">16:39</span>
<span class="t ovt" style="top:130.08px;font-size:29.2px;left:1762.0px;width:146px;text-align:center;transform:scaleY(0.94);transform-origin:50% 84.65%;">00:07:00</span>
</div>
<!-- Task Manager -->
<div id="tm" style="left:598px;top:8px;width:478px;height:562px;border-radius:8px;box-shadow:0 0 0 1px rgba(10,30,60,.7),0 2px 12px 2px rgba(0,0,0,.5);background:linear-gradient(180deg,rgba(255,255,255,0) 0,rgba(255,255,255,0) 100px,rgba(232,247,253,.97) 140px,#e6f6fc 300px,#f3fbfe 100%),linear-gradient(90deg,#2a6cbe 0,#3377c6 30%,#2a6dbd 60%,#4585cc 100%);">
<div style="left:0px;top:0px;width:478px;height:562px;border:1px solid rgba(255,255,255,.6);border-radius:8px;"></div>
<div style="left:6px;top:4px;width:240px;height:30px;background:radial-gradient(ellipse 50% 60% at 45% 50%,rgba(255,255,255,.42),rgba(255,255,255,.2) 60%,rgba(255,255,255,0) 100%);"></div>
<svg style="left:10px;top:9px" width="18" height="18" viewBox="0 0 18 18"><rect x="3" y="1" width="13" height="10" rx="1" fill="#d8dce0" stroke="#70767c" stroke-width=".8"/><rect x="4.500" y="2.500" width="10" height="7" fill="#0a2a0a"/><path d="M5 8l1.500-3 1.500 2.500 1.500-4 1.500 3.500 1.500-1.500 1.500 2" stroke="#30e040" stroke-width="1" fill="none"/><rect x="0" y="3" width="4" height="11" fill="#c8ccd0" stroke="#80868c" stroke-width=".6"/><path d="M7 11h5l1 3H6z" fill="#b8bcc0"/><ellipse cx="9.500" cy="15" rx="5" ry="1.500" fill="#d0d4d8" stroke="#8a9096" stroke-width=".5"/></svg>
<span class="t " style="top:9.90px;font-size:15px;left:33px;color:#000;letter-spacing:-.15px;">Windows Task-Manager</span>
<div style="left:342px;top:0px;width:129px;height:24px;border:1px solid rgba(215,230,250,.75);border-top:none;border-radius:0 0 6px 6px;box-shadow:0 0 0 1px rgba(20,50,100,.45);overflow:hidden;"><div style="left:0px;top:0px;width:35px;height:24px;background:linear-gradient(180deg,rgba(255,255,255,.12),rgba(255,255,255,.04));border-right:1px solid rgba(215,230,250,.7);"><div style="left:11px;top:14px;width:16px;height:4px;background:#f4f4f4;border:1px solid #5a5a66;border-radius:1px"></div></div><div style="left:35px;top:0px;width:33px;height:24px;background:linear-gradient(180deg,rgba(255,255,255,.12),rgba(255,255,255,.04));border-right:1px solid rgba(215,230,250,.7);"><div style="left:7px;top:5px;width:17px;height:13px;background:#f4f4f4;border:1px solid #5a5a66;border-radius:1px"></div><div style="left:10px;top:9px;width:11px;height:5px;background:#3c7fcb;border:1px solid #5a5a66"></div></div><div style="left:68px;top:0px;width:60px;height:24px;background:linear-gradient(180deg,rgba(255,255,255,.14),rgba(255,255,255,.05));"><svg style="left:22px;top:5px" width="16" height="14" viewBox="0 0 16 14"><path d="M1 1h4l3 3.600L11 1h4l-5 6 5 6h-4L8 9.400 5 13H1l5-6z" fill="#f4f4f4" stroke="#5a5a66" stroke-width=".9"/></svg></div></div>
<div style="left:7px;top:34px;width:465px;height:521px;background:#4a5a70;"></div>
<div style="left:8px;top:35px;width:463px;height:519px;background:#f0f0f0;overflow:hidden;"><div style="left:0px;top:0px;width:463px;height:24px;background:linear-gradient(180deg,#fdfdfe 0,#e9ecf6 35%,#dadfee 45%,#dfe3f1 100%);border-bottom:1px solid #c9cfe0;"></div>
<span class="t " style="top:4.80px;font-size:15px;left:7.7000000000000455px;color:#8c8c8c;letter-spacing:-.3px;">Datei</span>
<span class="t " style="top:4.80px;font-size:15px;left:57px;color:#8c8c8c;letter-spacing:-.3px;">Optionen</span>
<span class="t " style="top:4.80px;font-size:15px;left:133px;color:#8c8c8c;letter-spacing:-.3px;">Ansicht</span>
<span class="t " style="top:4.80px;font-size:15px;left:194px;color:#8c8c8c;letter-spacing:-.3px;">?</span>
<div style="left:8px;top:34px;width:91px;height:21px;border:1px solid #898c95;border-bottom:none;background:linear-gradient(180deg,#f2f2f2 0,#ebebeb 50%,#dddddd 50%,#cfcfcf 100%);"></div>
<span class="t tah" style="top:38.64px;font-size:12.6px;left:8.0px;width:91px;text-align:center;color:#000;">Anwendungen</span>
<div style="left:100px;top:34px;width:62px;height:21px;border:1px solid #898c95;border-bottom:none;background:linear-gradient(180deg,#f2f2f2 0,#ebebeb 50%,#dddddd 50%,#cfcfcf 100%);"></div>
<span class="t tah" style="top:38.64px;font-size:12.6px;left:100.0px;width:62px;text-align:center;color:#000;">Prozesse</span>
<div style="left:163px;top:34px;width:52px;height:21px;border:1px solid #898c95;border-bottom:none;background:linear-gradient(180deg,#f2f2f2 0,#ebebeb 50%,#dddddd 50%,#cfcfcf 100%);"></div>
<span class="t tah" style="top:38.64px;font-size:12.6px;left:163.0px;width:52px;text-align:center;color:#000;">Dienste</span>
<div style="left:278px;top:34px;width:62px;height:21px;border:1px solid #898c95;border-bottom:none;background:linear-gradient(180deg,#f2f2f2 0,#ebebeb 50%,#dddddd 50%,#cfcfcf 100%);"></div>
<span class="t tah" style="top:38.64px;font-size:12.6px;left:278.0px;width:62px;text-align:center;color:#000;">Netzwerk</span>
<div style="left:341px;top:34px;width:59px;height:21px;border:1px solid #898c95;border-bottom:none;background:linear-gradient(180deg,#f2f2f2 0,#ebebeb 50%,#dddddd 50%,#cfcfcf 100%);"></div>
<span class="t tah" style="top:38.64px;font-size:12.6px;left:341.0px;width:59px;text-align:center;color:#000;">Benutzer</span>
<div style="left:5px;top:54px;width:450px;height:430px;background:#fff;border:1px solid #898c95;"></div>
<div style="left:215px;top:31px;width:63px;height:25px;background:#fff;border:1px solid #898c95;border-bottom:none;"></div>
<span class="t tah" style="top:37.84px;font-size:12.6px;left:215.0px;width:63px;text-align:center;color:#000;">Leistung</span>
<div style="left:23px;top:74.5px;width:105px;height:98.5px;border:1px solid #d5dfe5;border-radius:4px;"></div><span class="t tah" style="top:69.34px;font-size:12.6px;left:32px;color:#000;background:#fff;padding:0 2px;margin-left:-2px;">CPU-Auslastung</span>
<div style="left:146px;top:74.5px;width:291px;height:98.5px;border:1px solid #d5dfe5;border-radius:4px;"></div><span class="t tah" style="top:69.34px;font-size:12.6px;left:155px;color:#000;background:#fff;padding:0 2px;margin-left:-2px;">Verlauf der CPU-Auslastung</span>
<div style="left:23px;top:189.5px;width:105px;height:98.5px;border:1px solid #d5dfe5;border-radius:4px;"></div><span class="t tah" style="top:184.34px;font-size:12.6px;left:32px;color:#000;background:#fff;padding:0 2px;margin-left:-2px;">Arbeitsspeicher</span>
<div style="left:146px;top:189.5px;width:291px;height:98.5px;border:1px solid #d5dfe5;border-radius:4px;"></div><span class="t tah" style="top:184.34px;font-size:12.6px;left:155px;color:#000;background:#fff;padding:0 2px;margin-left:-2px;">Verwendungsverlauf des physikal. Speichers</span>
<div style="left:34px;top:86px;width:83px;height:77px;background:#000;border-style:solid;border-width:2px 1px 1px 2px;border-color:#6d6d6d #e8e8e8 #e8e8e8 #6d6d6d;overflow:hidden;"><div style="left:23px;top:5px;width:16px;height:29px;background:repeating-linear-gradient(180deg,#000 0,#000 1px,transparent 1px,transparent 3px),repeating-linear-gradient(90deg,#00b400 0,#00b400 1px,#003800 1px,#003800 2px);"></div><div style="left:23px;top:35px;width:16px;height:17px;background:repeating-linear-gradient(180deg,#00ff00 0,#00ff00 2px,#000 2px,#000 3px);"></div><div style="left:40px;top:5px;width:16px;height:29px;background:repeating-linear-gradient(180deg,#000 0,#000 1px,transparent 1px,transparent 3px),repeating-linear-gradient(90deg,#00b400 0,#00b400 1px,#003800 1px,#003800 2px);"></div><div style="left:40px;top:35px;width:16px;height:17px;background:repeating-linear-gradient(180deg,#00ff00 0,#00ff00 2px,#000 2px,#000 3px);"></div><span class="t tah" style="top:57.84px;font-size:12.6px;left:-0.5px;width:80px;text-align:center;color:#00ff00;">34 %</span></div>
<div style="left:34px;top:201px;width:83px;height:77px;background:#000;border-style:solid;border-width:2px 1px 1px 2px;border-color:#6d6d6d #e8e8e8 #e8e8e8 #6d6d6d;overflow:hidden;"><div style="left:23px;top:5px;width:16px;height:16px;background:repeating-linear-gradient(180deg,#000 0,#000 1px,transparent 1px,transparent 3px),repeating-linear-gradient(90deg,#00b400 0,#00b400 1px,#003800 1px,#003800 2px);"></div><div style="left:23px;top:22px;width:16px;height:29px;background:repeating-linear-gradient(180deg,#00ff00 0,#00ff00 2px,#000 2px,#000 3px);"></div><div style="left:40px;top:5px;width:16px;height:16px;background:repeating-linear-gradient(180deg,#000 0,#000 1px,transparent 1px,transparent 3px),repeating-linear-gradient(90deg,#00b400 0,#00b400 1px,#003800 1px,#003800 2px);"></div><div style="left:40px;top:22px;width:16px;height:29px;background:repeating-linear-gradient(180deg,#00ff00 0,#00ff00 2px,#000 2px,#000 3px);"></div><span class="t tah" style="top:58.04px;font-size:12.6px;left:-0.5px;width:80px;text-align:center;color:#00ff00;">2,25 GB</span></div>
<div style="left:156px;top:86px;width:63px;height:78px;background:#000;border-style:solid;border-width:2px 1px 1px 2px;border-color:#6d6d6d #e8e8e8 #e8e8e8 #6d6d6d;"><svg style="left:0;top:0" width="60" height="75" viewBox="0 0 60 75"><path d="M12.5 0V75" stroke="#008040" stroke-width="1"/><path d="M24.5 0V75" stroke="#008040" stroke-width="1"/><path d="M36.5 0V75" stroke="#008040" stroke-width="1"/><path d="M48.5 0V75" stroke="#008040" stroke-width="1"/><path d="M0 11.5H60" stroke="#008040" stroke-width="1"/><path d="M0 23.5H60" stroke="#008040" stroke-width="1"/><path d="M0 35.5H60" stroke="#008040" stroke-width="1"/><path d="M0 47.5H60" stroke="#008040" stroke-width="1"/><path d="M0 59.5H60" stroke="#008040" stroke-width="1"/><path d="M0 71.5H60" stroke="#008040" stroke-width="1"/><polyline points="0.0,70.4 2.7,73.5 6.2,74.4 8.5,61.5 10.7,71.8 13.3,74.4 14.7,67.3 16.0,49.5 17.4,36.2 18.5,26.4 19.8,35.3 20.9,49.5 21.8,62.9 23.1,72.7 25.8,74.4 28.0,66.4 29.8,70.9 32.9,60.2 34.7,65.5 36.3,42.4 38.3,56.6 40.5,43.3 42.3,74.4 43.6,62.9 45.4,43.3 47.2,35.7 48.9,44.2 50.3,59.3 51.4,39.7 52.5,29.5 53.8,36.2 55.2,47.7 56.5,59.3 58.3,63.8 60.1,64.6" fill="none" stroke="#00ff00" stroke-width="1.100" stroke-linejoin="round"/></svg></div>
<div style="left:225px;top:86px;width:63px;height:78px;background:#000;border-style:solid;border-width:2px 1px 1px 2px;border-color:#6d6d6d #e8e8e8 #e8e8e8 #6d6d6d;"><svg style="left:0;top:0" width="60" height="75" viewBox="0 0 60 75"><path d="M12.5 0V75" stroke="#008040" stroke-width="1"/><path d="M24.5 0V75" stroke="#008040" stroke-width="1"/><path d="M36.5 0V75" stroke="#008040" stroke-width="1"/><path d="M48.5 0V75" stroke="#008040" stroke-width="1"/><path d="M0 11.5H60" stroke="#008040" stroke-width="1"/><path d="M0 23.5H60" stroke="#008040" stroke-width="1"/><path d="M0 35.5H60" stroke="#008040" stroke-width="1"/><path d="M0 47.5H60" stroke="#008040" stroke-width="1"/><path d="M0 59.5H60" stroke="#008040" stroke-width="1"/><path d="M0 71.5H60" stroke="#008040" stroke-width="1"/><polyline points="0.0,36.6 2.2,32.6 4.4,43.3 6.7,39.7 8.9,24.6 10.7,18.4 12.9,24.6 14.7,37.1 16.5,51.3 18.2,64.6 20.5,72.7 21.8,54.9 22.7,49.5 24.0,55.3 26.3,46.0 28.5,37.1 30.7,32.6 32.0,62.9 32.7,72.2 33.8,51.3 34.7,44.2 36.5,63.8 37.8,35.3 38.7,27.3 40.5,27.3 41.4,44.2 43.2,58.4 45.4,65.5 47.2,74.4 48.5,57.5 50.5,26.4 51.6,56.6 54.6,74.4 55.6,51.3 57.0,28.2 58.3,29.0 59.9,23.7" fill="none" stroke="#00ff00" stroke-width="1.100" stroke-linejoin="round"/></svg></div>
<div style="left:294px;top:86px;width:63px;height:78px;background:#000;border-style:solid;border-width:2px 1px 1px 2px;border-color:#6d6d6d #e8e8e8 #e8e8e8 #6d6d6d;"><svg style="left:0;top:0" width="60" height="75" viewBox="0 0 60 75"><path d="M12.5 0V75" stroke="#008040" stroke-width="1"/><path d="M24.5 0V75" stroke="#008040" stroke-width="1"/><path d="M36.5 0V75" stroke="#008040" stroke-width="1"/><path d="M48.5 0V75" stroke="#008040" stroke-width="1"/><path d="M0 11.5H60" stroke="#008040" stroke-width="1"/><path d="M0 23.5H60" stroke="#008040" stroke-width="1"/><path d="M0 35.5H60" stroke="#008040" stroke-width="1"/><path d="M0 47.5H60" stroke="#008040" stroke-width="1"/><path d="M0 59.5H60" stroke="#008040" stroke-width="1"/><path d="M0 71.5H60" stroke="#008040" stroke-width="1"/><polyline points="0.0,37.5 2.5,43.3 4.4,26.4 6.7,29.0 8.5,46.0 9.8,62.9 11.1,72.7 12.9,74.4 16.0,74.4 16.9,62.9 17.6,42.4 18.7,30.8 20.0,37.9 22.2,29.0 24.5,19.7 26.3,29.0 28.5,23.7 30.4,43.3 32.5,17.5 34.7,24.6 38.3,36.2 40.5,17.5 42.7,17.5 44.5,27.3 45.4,51.3 46.7,67.3 48.9,74.4 51.6,72.7 53.4,62.9 54.3,38.8 56.1,29.0 58.3,27.3 60.1,33.5" fill="none" stroke="#00ff00" stroke-width="1.100" stroke-linejoin="round"/></svg></div>
<div style="left:363px;top:86px;width:63px;height:78px;background:#000;border-style:solid;border-width:2px 1px 1px 2px;border-color:#6d6d6d #e8e8e8 #e8e8e8 #6d6d6d;"><svg style="left:0;top:0" width="60" height="75" viewBox="0 0 60 75"><path d="M12.5 0V75" stroke="#008040" stroke-width="1"/><path d="M24.5 0V75" stroke="#008040" stroke-width="1"/><path d="M36.5 0V75" stroke="#008040" stroke-width="1"/><path d="M48.5 0V75" stroke="#008040" stroke-width="1"/><path d="M0 11.5H60" stroke="#008040" stroke-width="1"/><path d="M0 23.5H60" stroke="#008040" stroke-width="1"/><path d="M0 35.5H60" stroke="#008040" stroke-width="1"/><path d="M0 47.5H60" stroke="#008040" stroke-width="1"/><path d="M0 59.5H60" stroke="#008040" stroke-width="1"/><path d="M0 71.5H60" stroke="#008040" stroke-width="1"/><polyline points="0.0,74.4 5.8,74.4 8.0,67.3 9.8,51.3 10.7,44.6 12.5,53.1 14.2,42.4 16.5,53.1 18.7,49.5 20.0,64.6 20.9,74.4 26.3,74.4 29.8,71.3 32.0,74.4 36.0,74.4 38.3,67.3 40.5,62.9 42.7,74.4 44.1,69.1 46.3,51.3 49.4,39.7 52.5,25.5 53.7,54.9 55.6,69.1 57.4,74.4 59.2,70.9 59.9,62.9" fill="none" stroke="#00ff00" stroke-width="1.100" stroke-linejoin="round"/></svg></div>
<div style="left:156px;top:201px;width:270px;height:77px;background:#000;border-style:solid;border-width:2px 1px 1px 2px;border-color:#6d6d6d #e8e8e8 #e8e8e8 #6d6d6d;"><svg style="left:0;top:0" width="267" height="74" viewBox="0 0 267 74"><path d="M3.5 0V75" stroke="#008040" stroke-width="1"/><path d="M15.5 0V75" stroke="#008040" stroke-width="1"/><path d="M27.5 0V75" stroke="#008040" stroke-width="1"/><path d="M39.5 0V75" stroke="#008040" stroke-width="1"/><path d="M51.5 0V75" stroke="#008040" stroke-width="1"/><path d="M63.5 0V75" stroke="#008040" stroke-width="1"/><path d="M75.5 0V75" stroke="#008040" stroke-width="1"/><path d="M87.5 0V75" stroke="#008040" stroke-width="1"/><path d="M99.5 0V75" stroke="#008040" stroke-width="1"/><path d="M111.5 0V75" stroke="#008040" stroke-width="1"/><path d="M123.5 0V75" stroke="#008040" stroke-width="1"/><path d="M135.5 0V75" stroke="#008040" stroke-width="1"/><path d="M147.5 0V75" stroke="#008040" stroke-width="1"/><path d="M159.5 0V75" stroke="#008040" stroke-width="1"/><path d="M171.5 0V75" stroke="#008040" stroke-width="1"/><path d="M183.5 0V75" stroke="#008040" stroke-width="1"/><path d="M195.5 0V75" stroke="#008040" stroke-width="1"/><path d="M207.5 0V75" stroke="#008040" stroke-width="1"/><path d="M219.5 0V75" stroke="#008040" stroke-width="1"/><path d="M231.5 0V75" stroke="#008040" stroke-width="1"/><path d="M243.5 0V75" stroke="#008040" stroke-width="1"/><path d="M255.5 0V75" stroke="#008040" stroke-width="1"/><path d="M267.5 0V75" stroke="#008040" stroke-width="1"/><path d="M0 11.5H270" stroke="#008040" stroke-width="1"/><path d="M0 23.5H270" stroke="#008040" stroke-width="1"/><path d="M0 35.5H270" stroke="#008040" stroke-width="1"/><path d="M0 47.5H270" stroke="#008040" stroke-width="1"/><path d="M0 59.5H270" stroke="#008040" stroke-width="1"/><path d="M0 71.5H270" stroke="#008040" stroke-width="1"/><path d="M197 25.500H243V24.500H267" fill="none" stroke="#1a8cff" stroke-width="1.300"/></svg></div>
<div style="left:23px;top:308.3px;width:198px;height:85.19999999999999px;border:1px solid #d5dfe5;border-radius:4px;"></div><span class="t tah" style="top:303.14px;font-size:12.6px;left:32px;color:#000;background:#fff;padding:0 2px;margin-left:-2px;">Physikalischer Speicher (MB)</span>
<div style="left:230.5px;top:308.3px;width:209.5px;height:107.19999999999999px;border:1px solid #d5dfe5;border-radius:4px;"></div><span class="t tah" style="top:303.14px;font-size:12.6px;left:239px;color:#000;background:#fff;padding:0 2px;margin-left:-2px;">System</span>
<div style="left:23px;top:413.7px;width:198px;height:49.69999999999999px;border:1px solid #d5dfe5;border-radius:4px;"></div><span class="t tah" style="top:408.54px;font-size:12.6px;left:32px;color:#000;background:#fff;padding:0 2px;margin-left:-2px;">Kernel-Speicher (MB)</span>
<span class="t tah" style="top:322.34px;font-size:12.6px;left:34px;color:#000;">Insgesamt</span>
<span class="t tah" style="top:322.34px;font-size:12.6px;left:132.5px;width:80px;text-align:right;color:#000;">3303</span>
<span class="t tah" style="top:340.34px;font-size:12.6px;left:34px;color:#000;">Im Cache</span>
<span class="t tah" style="top:340.34px;font-size:12.6px;left:132.5px;width:80px;text-align:right;color:#000;">1041</span>
<span class="t tah" style="top:358.34px;font-size:12.6px;left:34px;color:#000;">Verfügbar</span>
<span class="t tah" style="top:358.34px;font-size:12.6px;left:132.5px;width:80px;text-align:right;color:#000;">998</span>
<span class="t tah" style="top:376.34px;font-size:12.6px;left:34px;color:#000;">Frei</span>
<span class="t tah" style="top:376.34px;font-size:12.6px;left:132.5px;width:80px;text-align:right;color:#000;">0</span>
<span class="t tah" style="top:322.34px;font-size:12.6px;left:240px;color:#000;">Handles</span>
<span class="t tah" style="top:322.34px;font-size:12.6px;left:341.5px;width:90px;text-align:right;color:#000;">34662</span>
<span class="t tah" style="top:340.34px;font-size:12.6px;left:240px;color:#000;">Threads</span>
<span class="t tah" style="top:340.34px;font-size:12.6px;left:341.5px;width:90px;text-align:right;color:#000;">820</span>
<span class="t tah" style="top:358.34px;font-size:12.6px;left:240px;color:#000;">Prozesse</span>
<span class="t tah" style="top:358.34px;font-size:12.6px;left:341.5px;width:90px;text-align:right;color:#000;">54</span>
<span class="t tah" style="top:376.34px;font-size:12.6px;left:240px;color:#000;">Laufzeit</span>
<span class="t tah" style="top:376.34px;font-size:12.6px;left:341.5px;width:90px;text-align:right;color:#000;">6:22:22:10</span>
<span class="t tah" style="top:394.34px;font-size:12.6px;left:240px;color:#000;">Zugesichert (MB)</span>
<span class="t tah" style="top:394.34px;font-size:12.6px;left:333.5px;width:90px;text-align:right;color:#000;">2502/6604</span>
<span class="t tah" style="top:428.04px;font-size:12.6px;left:34px;color:#000;">Ausgelagert</span>
<span class="t tah" style="top:428.04px;font-size:12.6px;left:129.79999999999995px;width:80px;text-align:right;color:#000;">149</span>
<span class="t tah" style="top:446.04px;font-size:12.6px;left:34px;color:#000;">Nicht ausgelagert</span>
<span class="t tah" style="top:446.04px;font-size:12.6px;left:129.79999999999995px;width:80px;text-align:right;color:#000;">59</span>
<div style="left:231px;top:436px;width:206px;height:25px;border:1px solid #707070;border-radius:3px;background:linear-gradient(180deg,#f3f3f3 0,#ebebeb 48%,#dcdcdc 52%,#cfcfcf 100%);box-shadow:inset 0 0 0 1px rgba(255,255,255,.85);"></div>
<svg style="left:263px;top:439px" width="17" height="19" viewBox="0 0 17 19"><path d="M8.500 1C6 2.500 3.500 3 1.500 3c0 7 2 12 7 15 5-3 7-8 7-15-2 0-4.500-.5-7-2z" fill="#c9c9c9" stroke="#8a8a8a" stroke-width=".7"/><path d="M8.500 2.500C6.500 3.600 4.500 4 3 4.200c0 2 .2 3.800.7 5.300h4.800z" fill="#3a7fd8"/><path d="M8.500 2.500c2 1.100 4 1.500 5.500 1.700 0 2-.2 3.800-.7 5.300H8.500z" fill="#f4c430"/><path d="M3.700 9.500c.8 3 2.400 5.300 4.800 6.900V9.500z" fill="#f4c430"/><path d="M13.300 9.500c-.8 3-2.400 5.300-4.800 6.900V9.500z" fill="#3a7fd8"/></svg>
<span class="t tah" style="top:444.34px;font-size:12.6px;left:283px;color:#000;">Ressourcenmonitor...</span>
<div style="left:0px;top:491px;width:463px;height:1px;background:#a5a5a5;"></div>
<div style="left:0px;top:492px;width:463px;height:27px;background:#f1eded;"></div>
<div style="left:131px;top:494px;width:1px;height:24px;background:#d5d2d2;box-shadow:1px 0 0 #fbfafa;"></div>
<div style="left:296px;top:494px;width:1px;height:24px;background:#d5d2d2;box-shadow:1px 0 0 #fbfafa;"></div>
<span class="t " style="top:499.13px;font-size:14.5px;left:2.7000000000000455px;color:#000;letter-spacing:-.35px;">Prozesse: 54</span>
<span class="t " style="top:499.13px;font-size:14.5px;left:136.29999999999995px;color:#000;letter-spacing:-.35px;">CPU-Auslastung: 34%</span>
<div style="left:301px;top:494px;width:140px;height:25px;overflow:hidden;"><span class="t " style="top:5.13px;font-size:14.5px;left:0px;color:#000;letter-spacing:-.2px;">Physikalischer Speicher: 69%</span></div>
<svg style="left:450px;top:506px" width="12" height="12" viewBox="0 0 12 12"><g fill="#b5b2b2"><rect x="9" y="1" width="2" height="2"/><rect x="9" y="5" width="2" height="2"/><rect x="5" y="5" width="2" height="2"/><rect x="9" y="9" width="2" height="2"/><rect x="5" y="9" width="2" height="2"/><rect x="1" y="9" width="2" height="2"/></g></svg></div>
</div>
<!-- taskbar -->
<div id="taskbar" style="left:0;top:1032px;width:1919px;height:47px;background:linear-gradient(90deg,#1f68a6 0,#2f80c0 90px,#3a8ccc 250px,#4699d8 430px,#3a8fd2 640px,#2b7cc6 900px,#2066b0 1200px,#1b5494 1450px,#194a86 1700px,#17447c 1919px);border-top:1px solid rgba(20,40,70,.75);box-shadow:inset 0 1px 0 rgba(190,225,250,.65);">
<div style="left:0px;top:1px;width:1919px;height:45px;background:linear-gradient(180deg,rgba(255,255,255,.10) 0,rgba(255,255,255,.02) 45%,rgba(0,0,0,.06) 100%);"></div>
<svg style="left:9px;top:0px" width="48" height="47" viewBox="0 0 48 47"><defs><radialGradient id="orb" cx=".5" cy=".2" r=".85"><stop offset="0" stop-color="#a8d4f0"/><stop offset=".4" stop-color="#3a80c0"/><stop offset=".75" stop-color="#12488c"/><stop offset="1" stop-color="#0a3070"/></radialGradient><radialGradient id="orbg" cx=".5" cy="1" r=".55"><stop offset="0" stop-color="#4fe4ff" stop-opacity=".95"/><stop offset="1" stop-color="#4fe4ff" stop-opacity="0"/></radialGradient><linearGradient id="orbh" x1="0" y1="0" x2="0" y2="1"><stop offset="0" stop-color="#fff" stop-opacity=".55"/><stop offset="1" stop-color="#fff" stop-opacity=".05"/></linearGradient></defs>
<circle cx="23.800" cy="23.700" r="22" fill="#12386c" opacity=".6"/><circle cx="23.800" cy="23.700" r="20.600" fill="url(#orb)" stroke="#d4e8f8" stroke-width="1.100" stroke-opacity=".75"/><circle cx="23.800" cy="23.700" r="19.600" fill="url(#orbg)"/>
<path d="M5 18c3-9 11-14 19-14s16 5 19 14c-8 4-30 4-38 0z" fill="url(#orbh)"/>
<path d="M13.500 11.500c3.500-2 7-2 10.500.2l-2.200 10c-3.500-2-7-2-10.500-.2z" fill="#f0582a"/><path d="M25.800 12.300c3.500 2 7 2 10.500-.2l-2.200 10c-3.500 2.200-7 2.200-10.500.2z" fill="#86c440"/><path d="M10.800 23.600c3.500-2 7-2 10.500.2l-2.200 10c-3.500-2-7-2-10.500-.2z" fill="#3a9cf0"/><path d="M23.100 24.400c3.500 2 7 2 10.500-.2l-2.200 10c-3.500 2.200-7 2.200-10.500.2z" fill="#fcc428"/></svg>
<svg style="left:85px;top:1px" width="41" height="42" viewBox="0 0 44 42"><defs><linearGradient id="fo" x1="0" y1="0" x2="0" y2="1"><stop offset="0" stop-color="#fbe9a0"/><stop offset="1" stop-color="#e8c450"/></linearGradient></defs>
<path d="M2 6h13l3 3h20v4H2z" fill="#e8c860" stroke="#c8a030" stroke-width=".6"/><path d="M4 8h12v3H4z" fill="#fff"/><rect x="5" y="8.500" width="2" height="1.500" fill="#3a9a3a"/><rect x="14" y="11" width="2" height="1.500" fill="#d03030"/><rect x="25" y="13" width="2" height="1.500" fill="#3060d0"/>
<path d="M1 13h40v26H1z" fill="url(#fo)" stroke="#c8a030" stroke-width=".7"/>
<path d="M6 24h28l2 15H4z" fill="#b8daf2" stroke="#8ab4d8" stroke-width=".7" opacity=".95"/><path d="M12 33h16v6H12z" fill="#e8c450" opacity=".9"/></svg>
<svg style="left:155px;top:9px" width="34" height="35" viewBox="0 0 36 38"><rect x="8" y="3" width="26" height="31" rx="2" fill="#6cb0e4" stroke="#4a90cc" stroke-width=".8" opacity=".9"/><rect x="4" y="4" width="26" height="32" rx="2" fill="#84c0ec" stroke="#5a9cd4" stroke-width=".8"/>
<circle cx="15" cy="20" r="11.500" fill="#f07a1c" stroke="#f8a050" stroke-width="1"/><path d="M11 13v14l12-7z" fill="#fff"/></svg>
<svg style="left:223px;top:3px" width="43" height="42" viewBox="-1 0 88 86"><defs><radialGradient id="fbg" cx=".42" cy=".3" r=".7"><stop offset="0" stop-color="#c8f4fe"/><stop offset=".3" stop-color="#58b4ec"/><stop offset=".7" stop-color="#1a5cb4"/><stop offset="1" stop-color="#0a2a78"/></radialGradient><linearGradient id="fbf" x1="0" y1=".4" x2="1" y2=".5"><stop offset="0" stop-color="#e4641a"/><stop offset=".35" stop-color="#f08a1e"/><stop offset=".7" stop-color="#f8ac22"/><stop offset="1" stop-color="#fdd03a"/></linearGradient></defs>
<circle cx="47" cy="30" r="29.500" fill="url(#fbg)"/>
<path d="M52 14c4-2 8 0 9 3 2 1 3 4 2 6 2 3 2 8-1 11-2 4-1 8-4 12-3 3-8 2-9-2 1-4-3-6-2-10-3-3-2-8 0-11-1-4 2-8 5-9z" fill="#164a98" opacity=".7"/>
<path d="M8.700 8.500C10 14 14 17 18 17C21 13 25 11 29 12L34 9C33 13 34 16 36 18C39 20 40 24 39 27C36 29 33 30 31 31C27 35 26 39 28 43C33 47 42 47 50 45C47 51 40 54 32 54C40 60 50 60 57 58C62 54 65 50 64 45C67 40 68 35 67 31C67 24 65 18 63 14C61 10 59 7 57 5C66 8 74 14 78 22C83 30 85 38 83 48C80 62 66 78 46 81C24 83 6 68 2 48C-1 34 2 20 8.700 8.500Z" fill="url(#fbf)"/>
<path d="M57 5c9 3 17 9 21 17 5 8 7 16 5 26-1-10-5-18-12-24 1-7-6-14-14-19z" fill="#fedc4a" opacity=".8"/>
<path d="M72 30l5 8-3 10 4 6-8 12c3-8 1-14-2-18 3-6 4-12 4-18z" fill="#e8801a" opacity=".55"/>
<path d="M18 17c3 0 6 1 8 3-4 0-7 2-8 5-2-2-2-5 0-8z" fill="#fbe0b0" opacity=".5"/></svg>
<svg style="left:293px;top:3px" width="44" height="44" viewBox="0 0 44 44"><defs><linearGradient id="ie" x1="0" y1="0" x2="0" y2="1"><stop offset="0" stop-color="#8fdcfa"/><stop offset=".5" stop-color="#3aa8ee"/><stop offset="1" stop-color="#1a7ad8"/></linearGradient></defs>
<path d="M22 8c9 0 14.500 6.500 14.500 15.500H15.500c.3 4 3 6.500 7 6.500 3 0 5-1.200 6.200-3.500h7c-2 6.500-7 10-13.700 10-8.500 0-14.500-6-14.500-14.500S13.500 8 22 8zm-6.300 11h13c-.3-3.500-2.800-5.500-6.500-5.500s-6 2-6.500 5.500z" fill="url(#ie)" stroke="#1668c0" stroke-width=".6"/>
<path d="M34.500 9.500c2.500-3 5-4 6-3 2 2-3 10-11 18.500S9 40.500 5 38c-3-2 0-9 5-15" fill="none" stroke="#f2c01a" stroke-width="2.800" stroke-linecap="round"/></svg>
<div style="left:352px;top:1px;width:66px;height:47px;border:1px solid rgba(215,235,250,.75);border-radius:3px;background:linear-gradient(180deg,rgba(255,255,255,.42) 0,rgba(255,255,255,.22) 45%,rgba(255,255,255,.10) 50%,rgba(255,255,255,.18) 100%);box-shadow:0 0 0 1px rgba(20,50,90,.55);"></div>
<div style="left:422px;top:1px;width:66px;height:47px;border:1px solid rgba(215,235,250,.75);border-radius:3px;background:linear-gradient(180deg,rgba(255,255,255,.42) 0,rgba(255,255,255,.22) 45%,rgba(255,255,255,.10) 50%,rgba(255,255,255,.18) 100%);box-shadow:0 0 0 1px rgba(20,50,90,.55);"></div>
<div style="left:492px;top:1px;width:66px;height:47px;border:1px solid rgba(215,235,250,.75);border-radius:3px;background:linear-gradient(180deg,rgba(255,255,255,.42) 0,rgba(255,255,255,.22) 45%,rgba(255,255,255,.10) 50%,rgba(255,255,255,.18) 100%);box-shadow:0 0 0 1px rgba(20,50,90,.55);"></div>
<div style="left:562px;top:1px;width:66px;height:47px;border:1px solid rgba(215,235,250,.75);border-radius:3px;background:linear-gradient(180deg,rgba(255,255,255,.42) 0,rgba(255,255,255,.22) 45%,rgba(255,255,255,.10) 50%,rgba(255,255,255,.18) 100%);box-shadow:0 0 0 1px rgba(20,50,90,.55);"></div>
<svg style="left:368px;top:3px" width="34" height="40" viewBox="0 0 50 58"><defs><linearGradient id="tvb2" x1="0" y1="0" x2="1" y2="1"><stop offset="0" stop-color="#28b8f8"/><stop offset="1" stop-color="#0a6ae8"/></linearGradient></defs>
<path d="M2 4c0-2 2-3 4-3l38 4c3 0 4 2 4 4v46H2z" fill="url(#tvb2)"/><path d="M43 5c3 0 5 2 5 4v48h-5z" fill="#0a3fe0"/><ellipse cx="23" cy="31" rx="16" ry="20" fill="#f4f4f4" stroke="#0a3aa8" stroke-width=".8"/><path d="M7 31l9-6v4h11v-5l11 7-11 6v-4H16v4z" fill="#1a8af0"/></svg>
<div style="left:436px;top:4px;width:38px;height:38px;background:#e8101c;border-radius:6px;box-shadow:inset 0 0 0 1px rgba(120,0,0,.4);"></div>
<span class="t " style="top:5.53px;font-size:36px;left:436.0px;width:38px;text-align:center;color:#fff;font-weight:bold;font-family:'Liberation Sans',sans-serif;">M</span>
<svg style="left:505px;top:5px" width="40" height="38" viewBox="0 0 40 38"><rect x="2" y="8" width="8" height="20" fill="#c8ccd2" stroke="#7a8088" stroke-width=".7"/><rect x="9" y="2" width="27" height="21" rx="1.500" fill="#dcdfe3" stroke="#6a7078" stroke-width=".8"/><rect x="11.500" y="4.500" width="22" height="16" fill="#0a1f0a"/><path d="M12 8h21M12 11h21M12 14h21M12 17h21" stroke="#1f7a2a" stroke-width=".7"/><path d="M13 18l3-7 2 5 3-10 3 9 2-5 3 6 3-3" fill="none" stroke="#3af04a" stroke-width="1.200"/><path d="M17 23h11l2 7H15z" fill="#b8bcc2"/><ellipse cx="22.500" cy="31" rx="11" ry="3" fill="#d8dbe0" stroke="#8a9098" stroke-width=".6"/></svg>
<svg style="left:574px;top:3px" width="42" height="42" viewBox="0 0 42 42"><path d="M3 24c0-10 10-15 20-13 9 2 11 9 8 14-2 3-6 2-8 4s0 6-4 7c-8 1-16-4-16-12z" fill="#e4eef8" stroke="#7f9fc4" stroke-width="1"/><circle cx="10" cy="21" r="2.600" fill="#e04030"/><circle cx="15" cy="15.500" r="2.600" fill="#48b040"/><circle cx="22.500" cy="14.500" r="2.600" fill="#f0c020"/><circle cx="14" cy="28" r="2.400" fill="#3a7bd0"/><path d="M33 5l3 2-11 22-3.500 5.500.5-6.500z" fill="#e8952c" stroke="#a86414" stroke-width=".7"/><path d="M33 5l3 2 2.500-6c-2-.5-4 1-5.500 4z" fill="#c9a36a" stroke="#8a6a3a" stroke-width=".5"/></svg>
<span class="t " style="top:14.48px;font-size:14.2px;left:1503.6px;color:#fff;letter-spacing:-.3px;">DE</span>
<svg style="left:1541px;top:14px" width="20" height="20" viewBox="0 0 20 20"><path d="M5 1h8l1 3H9v3h8l2 11H1L3 7h3V4H4z" fill="#22b030" stroke="#0a7a1a" stroke-width=".6"/><path d="M5 12l3 3 6-6" fill="none" stroke="#fff" stroke-width="2"/></svg>
<svg style="left:1571px;top:14px" width="20" height="20" viewBox="0 0 20 20"><path d="M5 2l2-1h7l2 1v14H5z" fill="#e4e4e4" stroke="#9a9a9a" stroke-width=".5"/><rect x="1" y="15" width="2.500" height="4" fill="#3aa050"/><rect x="5" y="12" width="2.500" height="7" fill="#3aa050"/><rect x="9" y="9" width="2.500" height="10" fill="#3aa050"/><rect x="13" y="6" width="2.500" height="13" fill="#3aa050"/><rect x="16.500" y="3" width="2.500" height="16" fill="#3aa050"/></svg>
<svg style="left:1600px;top:14px" width="20" height="20" viewBox="0 0 20 20"><path d="M5 3l12-2v16l-12 2z" fill="#b8d4f0" stroke="#6a94c4" stroke-width=".6"/><path d="M8 6c1.500-.8 3-.6 4 0l-.6 3c-1.200-.6-2.600-.6-4 0z" fill="#f0602a"/><path d="M12.500 6.200c1.200.6 2.600.6 4 0l-.6 3c-1.400.6-2.800.6-4 0z" fill="#7cc030"/><path d="M7.300 10c1.400-.6 2.800-.6 4 0l-.6 3c-1.200-.6-2.600-.6-4 0z" fill="#2f8fe8"/><path d="M11.800 10.200c1.200.6 2.600.6 4 0l-.6 3c-1.400.6-2.800.6-4 0z" fill="#f8c81a"/><path d="M1 12c3 4 10 3 16-3" fill="none" stroke="#f0a020" stroke-width="1.800"/></svg>
<svg style="left:1631px;top:14px" width="20" height="20" viewBox="0 0 20 20"><path d="M2 2l14 1.500c1 0 2 1 2 2V18H2z" fill="#1a9af4"/><path d="M16 3.500c1 0 2 1 2 2V18h-2z" fill="#0a3fe0"/><ellipse cx="9" cy="10.500" rx="5.500" ry="6.500" fill="#f4f4f4"/><path d="M3.500 10.500l3-2v1.300h5V8.500l3 2-3 2v-1.300h-5v1.300z" fill="#1a8af0"/></svg>
<svg style="left:1661px;top:14px" width="20" height="20" viewBox="0 0 20 20"><rect x="2" y="1" width="16" height="18" fill="#0a1a0a" stroke="#c8c8c8" stroke-width="1"/><rect x="3" y="11" width="14" height="7" fill="#20f030"/><path d="M3 3h14M3 5h14M3 7h14M3 9h14" stroke="#20c030" stroke-width="1" stroke-dasharray="1.500 1"/></svg>
<svg style="left:1691px;top:14px" width="20" height="20" viewBox="0 0 20 20"><path d="M4 1v18" stroke="#fff" stroke-width="1.600"/><path d="M5 2c4-1.500 6 1.500 11 0v8c-5 1.500-7-1.500-11 0z" fill="#fff"/></svg>
<svg style="left:1721px;top:14px" width="20" height="20" viewBox="0 0 20 20"><path d="M2 7h4l6-5v16l-6-5H2z" fill="#e86a3a" stroke="#a83a1a" stroke-width=".6"/><path d="M14 6c2 2 2 6 0 8M16 4c3 3 3 9 0 12" fill="none" stroke="#c04a2a" stroke-width="1.200"/></svg>
<svg style="left:1751px;top:14px" width="20" height="20" viewBox="0 0 20 20"><rect x="6" y="5" width="13" height="10" fill="#2a4a78" stroke="#f4f4f4" stroke-width="1.400"/><path d="M9 18h7M12.500 15v3" stroke="#f4f4f4" stroke-width="1.400"/><rect x="1" y="1" width="5" height="7" fill="#f4f4f4"/><path d="M3.500 8v8h3" fill="none" stroke="#f4f4f4" stroke-width="1.200"/></svg>
<svg style="left:1781px;top:14px" width="20" height="20" viewBox="0 0 20 20"><path d="M1 7h4l6-5v16l-6-5H1z" fill="#f4f4f4" stroke="#9aa4b4" stroke-width=".5"/><path d="M13 7c1.500 1.500 1.500 4.500 0 6M15.500 5c2.500 2.500 2.500 7.500 0 10M18 3.500c3 3.500 3 9.500 0 13" fill="none" stroke="#f4f4f4" stroke-width="1.100"/></svg>
<span class="t " style="top:5.90px;font-size:15px;left:1807.5px;width:100px;text-align:center;color:#fff;letter-spacing:-.5px;">16:44</span>
<span class="t " style="top:28.10px;font-size:15px;left:1807.0px;width:100px;text-align:center;color:#fff;letter-spacing:-.45px;">28.04.2013</span>
<div style="left:1906px;top:1px;width:13px;height:46px;border-left:1px solid rgba(200,225,250,.55);background:linear-gradient(180deg,rgba(255,255,255,.28),rgba(255,255,255,.06) 50%,rgba(255,255,255,.02));box-shadow:-1px 0 0 rgba(10,30,60,.6);"></div>
</div>
</body>
</html>
